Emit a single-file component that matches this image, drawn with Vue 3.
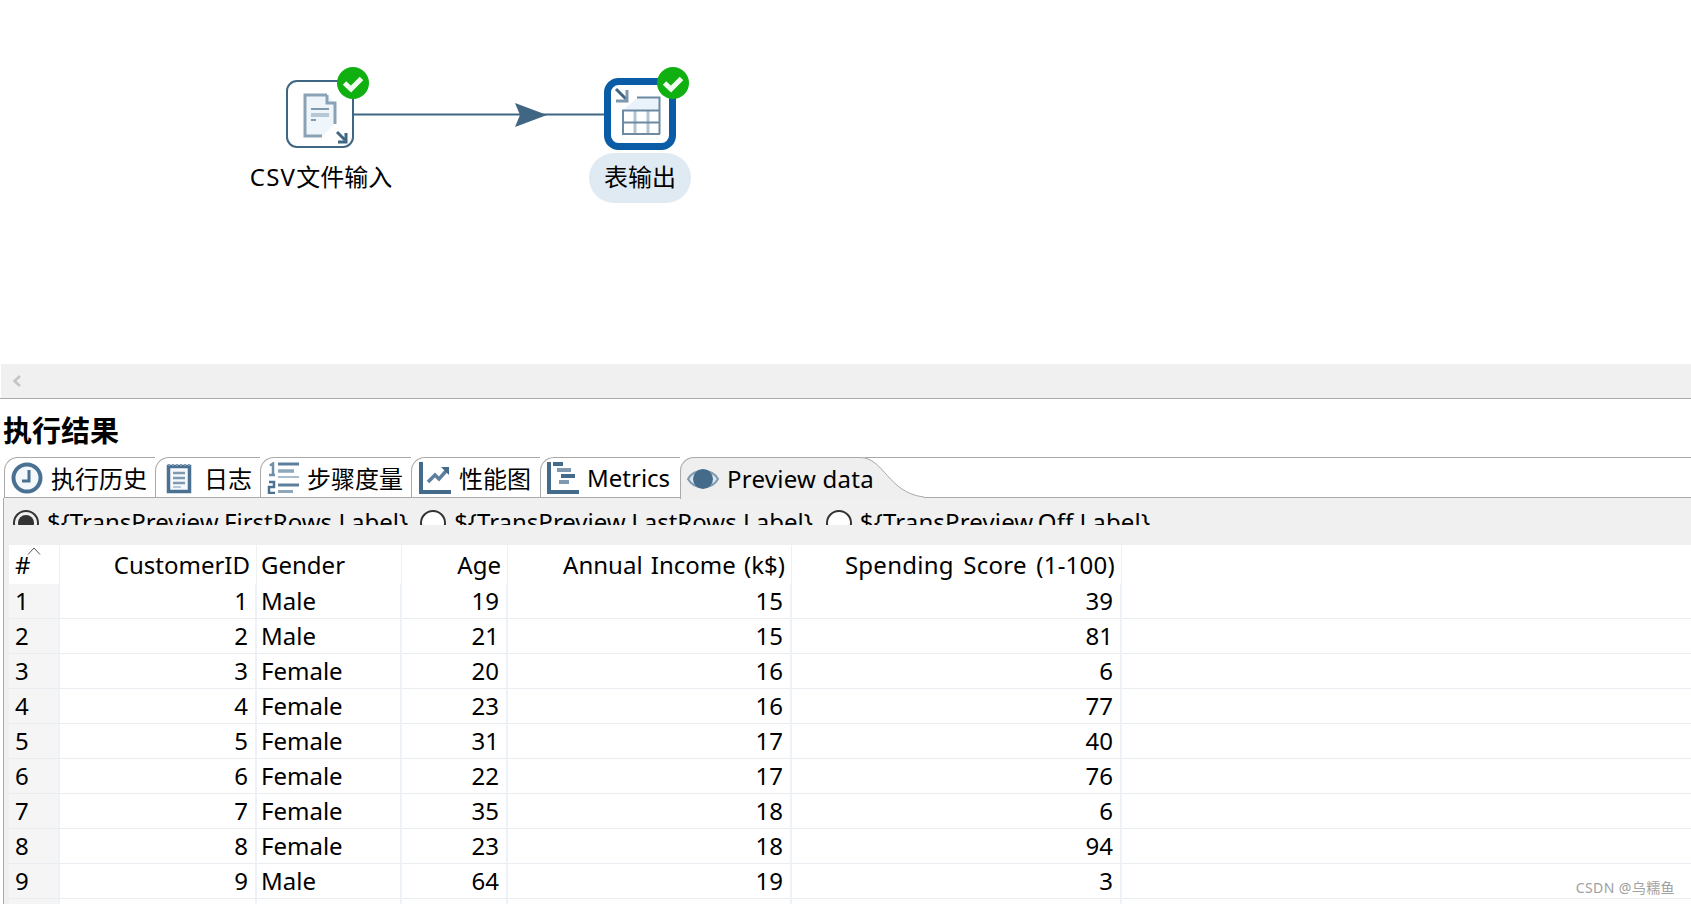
<script setup>
const tabs = [
  { key: 'history', label: '执行历史' },
  { key: 'log', label: '日志' },
  { key: 'steps', label: '步骤度量' },
  { key: 'perf', label: '性能图' },
  { key: 'metrics', label: 'Metrics' },
  { key: 'preview', label: 'Preview data' }
]
const radios = [
  { label: '${TransPreview.FirstRows.Label}', on: true },
  { label: '${TransPreview.LastRows.Label}', on: false },
  { label: '${TransPreview.Off.Label}', on: false }
]
const rows = [
  [1, 1, 'Male', 19, 15, 39],
  [2, 2, 'Male', 21, 15, 81],
  [3, 3, 'Female', 20, 16, 6],
  [4, 4, 'Female', 23, 16, 77],
  [5, 5, 'Female', 31, 17, 40],
  [6, 6, 'Female', 22, 17, 76],
  [7, 7, 'Female', 35, 18, 6],
  [8, 8, 'Female', 23, 18, 94],
  [9, 9, 'Male', 64, 19, 3],
  [10, 10, 'Female', 30, 19, 72]
]
</script>

<template>
  <div class="page">
    <section class="canvas">
      <svg class="diagram" width="1691" height="364" viewBox="0 0 1691 364">
        <line x1="354" y1="114.500" x2="604" y2="114.500" stroke="#3f6683" stroke-width="2" />
        <path d="M515 103 L547 115 L515 127 L520 115 Z" fill="#3f6683" />

        <rect x="287" y="81" width="66" height="66" rx="10" fill="#fff" stroke="#3f6683" stroke-width="2" />
        <path d="M305 95 H327 L336 104 V123 L322 136 H305 Z" fill="#eef6fc" />
        <path d="M327 95 H305 V136 H322 M327 95 V103 H335 V124" fill="none" stroke="#8aa2b6" stroke-width="3" />
        <path d="M311 109 H329" stroke="#7f99ae" stroke-width="2" />
        <path d="M311 115 H329" stroke="#b6c8d6" stroke-width="4" />
        <path d="M311 120 H316" stroke="#7f99ae" stroke-width="2" />
        <path d="M337 132 L345 140" stroke="#3f6683" stroke-width="3" />
        <path d="M346 133 V142 H338" fill="none" stroke="#3f6683" stroke-width="3" />

        <rect x="607.500" y="81.500" width="65" height="65" rx="11" fill="#fff" stroke="#0a5ca6" stroke-width="7" />
        <path d="M637 98 L623 110 H660 V98 Z" fill="#eaf3fb" />
        <path d="M637 97.500 H659.500 V134" fill="none" stroke="#6c8aa1" stroke-width="2" />
        <path d="M635 110 V134 M648 110 V134" stroke="#b2c3d1" stroke-width="3" />
        <path d="M623 134 V110.500 H660 M622 122.500 H660 M622 134 H660" fill="none" stroke="#6c8aa1" stroke-width="2" />
        <path d="M616 89 L626 99" stroke="#3f6683" stroke-width="3" />
        <path d="M627 90 V101 H616" fill="none" stroke="#7c98ad" stroke-width="3" />

        <g>
          <circle cx="353" cy="83" r="16" fill="#0fb010" />
          <path d="M344.500 83 L351 89 L361.500 78.500" fill="none" stroke="#f2fbf2" stroke-width="5" />
          <circle cx="673" cy="83" r="16" fill="#0fb010" />
          <path d="M664.500 83 L671 89 L681.500 78.500" fill="none" stroke="#f2fbf2" stroke-width="5" />
        </g>
      </svg>
      <div class="node-label first"><span class="latin">CSV</span>文件输入</div>
      <div class="node-label second">表输出</div>
    </section>

    <div class="scrollbar">
      <svg width="12" height="14" viewBox="0 0 12 14"><path d="M9 2 L3.500 7 L9 12" fill="none" stroke="#c4c4c4" stroke-width="2.500" /></svg>
    </div>

    <h2 class="title">执行结果</h2>

    <div class="tabs">
      <div v-for="t in tabs" :key="t.key" class="tab" :class="['tab-' + t.key, { active: t.key === 'preview' }]">
        <svg class="tab-icon" width="32" height="32" viewBox="0 0 32 32">
          <template v-if="t.key === 'history'">
            <circle cx="16" cy="16" r="13.500" fill="#f4f8fb" stroke="#4b7192" stroke-width="4" />
            <path d="M18 8 V19 H11" fill="none" stroke="#4b7192" stroke-width="3" />
          </template>
          <template v-else-if="t.key === 'log'">
            <rect x="5.500" y="4.500" width="21" height="25" fill="#f6f9fb" stroke="#4b7192" stroke-width="3.500" />
            <path d="M6 2 V4 M10 2 V4 M14 2 V4 M18 2 V4 M22 2 V4 M26 2 V4" stroke="#7f9ab0" stroke-width="2" />
            <path d="M10 11 H22 M10 16 H22 M10 21 H22" stroke="#7f9ab0" stroke-width="2.500" />
            <path d="M10 25 H18" stroke="#b6c8d6" stroke-width="2" />
          </template>
          <template v-else-if="t.key === 'steps'">
            <path d="M3 3.500 L6 1.500 V13 M2 13 H8" fill="none" stroke="#6f90aa" stroke-width="2.500" />
            <path d="M2 20 H7 V25 H2 V31 H8" fill="none" stroke="#4b7192" stroke-width="2.500" />
            <path d="M11 2 H32" stroke="#5d7f9b" stroke-width="3" />
            <path d="M11 9 H27" stroke="#8ea7bb" stroke-width="3.500" />
            <path d="M11 15 H32" stroke="#8ea7bb" stroke-width="1.500" />
            <path d="M11 23 H32" stroke="#5d7f9b" stroke-width="3" />
            <path d="M11 29.500 H26" stroke="#8ea7bb" stroke-width="3" />
          </template>
          <template v-else-if="t.key === 'perf'">
            <path d="M2 0 V30 H32" fill="none" stroke="#456b8b" stroke-width="4" />
            <path d="M9 20 L16 13 L20 17 L28 8" fill="none" stroke="#5d7f9b" stroke-width="3.500" />
            <path d="M22 5 H30 V13 Z" fill="#456b8b" />
          </template>
          <template v-else-if="t.key === 'metrics'">
            <path d="M2 0 V30 H32" fill="none" stroke="#456b8b" stroke-width="4" />
            <path d="M6 2 H16" stroke="#456b8b" stroke-width="4" />
            <path d="M10 8 H24" stroke="#7f9ab0" stroke-width="4" />
            <path d="M14 14 H28" stroke="#456b8b" stroke-width="4" />
            <path d="M12 20 H22" stroke="#7f9ab0" stroke-width="4" />
          </template>
          <template v-else>
            <path d="M1 16 C7 5 25 5 31 16 C25 27 7 27 1 16 Z" fill="#dbe5ed" stroke="#7f9ab0" stroke-width="2" />
            <circle cx="16" cy="16" r="10" fill="#456b8b" />
          </template>
        </svg>
        <span class="tab-text">{{ t.label }}</span>
        <svg v-if="t.key === 'preview'" class="tab-curve" width="64" height="42" viewBox="0 0 64 42">
          <path d="M0 0 C24 0 28 36 64 40 V42 H0 Z" fill="#efefef" />
          <path d="M0 .5 C24 .5 28 36 64 40" fill="none" stroke="#aaa" />
        </svg>
      </div>
      <div class="tab-rest"></div>
    </div>

    <div class="panel">
      <div class="radios">
        <label v-for="r in radios" :key="r.label" class="radio">
          <span class="dot" :class="{ on: r.on }"></span>
          <span class="radio-text">{{ r.label }}</span>
        </label>
      </div>
      <table class="grid">
        <colgroup>
          <col class="c0" /><col class="c1" /><col class="c2" /><col class="c3" /><col class="c4" /><col class="c5" /><col />
        </colgroup>
        <thead>
          <tr>
            <th class="left idx">#<svg class="caret" width="14" height="8" viewBox="0 0 14 8"><path d="M1 7.500 L7 1 L13 7.500" fill="none" stroke="#555" /></svg></th>
            <th>CustomerID</th>
            <th class="left">Gender</th>
            <th>Age</th>
            <th>Annual Income (k$)</th>
            <th class="score">Spending Score (1-100)</th>
            <th class="fill"></th>
          </tr>
        </thead>
        <tbody>
          <tr v-for="r in rows" :key="r[0]">
            <td class="left idx shade">{{ r[0] }}</td>
            <td>{{ r[1] }}</td>
            <td class="left">{{ r[2] }}</td>
            <td>{{ r[3] }}</td>
            <td>{{ r[4] }}</td>
            <td>{{ r[5] }}</td>
            <td class="fill"></td>
          </tr>
        </tbody>
      </table>
    </div>

    <div class="watermark">CSDN @乌糯鱼</div>
  </div>
</template>

<style scoped>
.page {
  position: relative;
  width: 1691px;
  height: 904px;
  overflow: hidden;
  background: #fff;
  color: #000;
  font-family: "Noto Sans", "Noto Sans CJK SC", sans-serif;
  font-size: 24px;
}
.canvas {
  position: relative;
  height: 364px;
}
.diagram {
  position: absolute;
  left: 0;
  top: 0;
}
.node-label {
  position: absolute;
  height: 50px;
  line-height: 48px;
  top: 153px;
  text-align: center;
  white-space: nowrap;
}
.node-label.first {
  left: 241px;
  width: 160px;
}
.latin {
  letter-spacing: 1.300px;
}
.node-label.second {
  left: 589px;
  width: 102px;
  background: #e0eaf3;
  border-radius: 25px;
}
.scrollbar {
  height: 35px;
  background: #f0f0f0;
  border-bottom: 1px solid #aaa;
  box-sizing: border-box;
  display: flex;
  align-items: center;
  padding-left: 11px;
  box-shadow: inset 1px 0 0 #fff;
}
.title {
  margin: 0;
  height: 58px;
  padding-left: 3px;
  font-size: 29px;
  font-weight: 700;
  line-height: 64px;
  box-sizing: border-box;
}
.tabs {
  display: flex;
  height: 41px;
  margin-left: 4px;
  box-sizing: border-box;
  position: relative;
}
.tab {
  position: relative;
  display: flex;
  align-items: center;
  gap: 8px;
  height: 41px;
  box-sizing: border-box;
  padding-left: 7px;
  border-top: 1px solid #aaa;
  border-left: 1px solid #aaa;
  border-bottom: 1px solid #aaa;
  border-top-left-radius: 14px;
  white-space: nowrap;
  flex: none;
}
.tab-icon {
  flex: none;
}
.tab-text {
  position: relative;
  z-index: 1;
}
.tab-history { width: 151px; padding-left: 6px; }
.tab-log { width: 105px; gap: 9px; }
.tab-steps { width: 151px; padding-left: 6px; }
.tab-perf { width: 129px; }
.tab-metrics { width: 140px; padding-left: 6px; }
.tab-preview { width: 180px; padding-left: 6px; gap: 8px; letter-spacing: .25px; }
.tab.active {
  background: #efefef;
  height: 42px;
  border-bottom: 0;
  z-index: 1;
}
.tab-curve {
  position: absolute;
  left: 179px;
  top: -1px;
}
.tab-rest {
  flex: 1;
  border-top: 1px solid #aaa;
  border-bottom: 1px solid #aaa;
}
.panel {
  height: 407px;
  margin-left: 3px;
  border-left: 1px solid #aaa;
  background: #f0f0f0;
  box-sizing: border-box;
}
.radios {
  display: flex;
  overflow: hidden;
  padding-left: 9px;
  padding-top: 12px;
  gap: 12px;
  height: 15px;
  margin-bottom: 20px;
}
.radio {
  display: flex;
  gap: 8px;
  height: 34px;
  line-height: 30px;
  white-space: nowrap;
}
.radio-text {
  margin-top: -3px;
}
.radio:last-child .radio-text {
  letter-spacing: .15px;
}
.radio:nth-child(2) .radio-text {
  margin-right: 1px;
}
.dot {
  flex: none;
  width: 22px;
  height: 22px;
  border: 2px solid #333;
  border-radius: 50%;
  background: #fff;
  position: relative;
}
.dot.on {
  background: #f0f0f0;
}
.dot.on::after {
  content: "";
  position: absolute;
  left: 3px;
  top: 3px;
  width: 16px;
  height: 16px;
  border-radius: 50%;
  background: #333;
}
.grid {
  margin-left: 5px;
  width: 1682px;
  table-layout: fixed;
  border-collapse: separate;
  border-spacing: 0;
  background: #fff;
}
.c0 { width: 51px; }
.c1 { width: 197px; }
.c2 { width: 145px; }
.c3 { width: 106px; }
.c4 { width: 284px; }
.c5 { width: 330px; }
th, td {
  box-sizing: border-box;
  padding: 0 7px 0 0;
  text-align: right;
  font-weight: 400;
  white-space: nowrap;
  overflow: hidden;
}
th {
  height: 39px;
  padding-right: 6px;
  border-right: 1px solid #eef0f2;
  word-spacing: 2px;
}
th.score {
  word-spacing: 3px;
  letter-spacing: .25px;
}
td {
  height: 35px;
  padding-bottom: 1px;
  border-right: 2px solid #edf1f8;
  border-bottom: 1px solid #e9edf2;
}
.left {
  text-align: left;
  padding-left: 4px;
}
.idx {
  position: relative;
  overflow: visible;
  padding-left: 6px;
}
.shade {
  background: #f5f5f5;
}
.caret {
  position: absolute;
  left: 18px;
  top: 2px;
}
.fill {
  border-right: 0;
}
.watermark {
  position: absolute;
  right: 16px;
  top: 878px;
  font-size: 14px;
  line-height: 20px;
  letter-spacing: .4px;
  color: #a0a0a0;
}
</style>
